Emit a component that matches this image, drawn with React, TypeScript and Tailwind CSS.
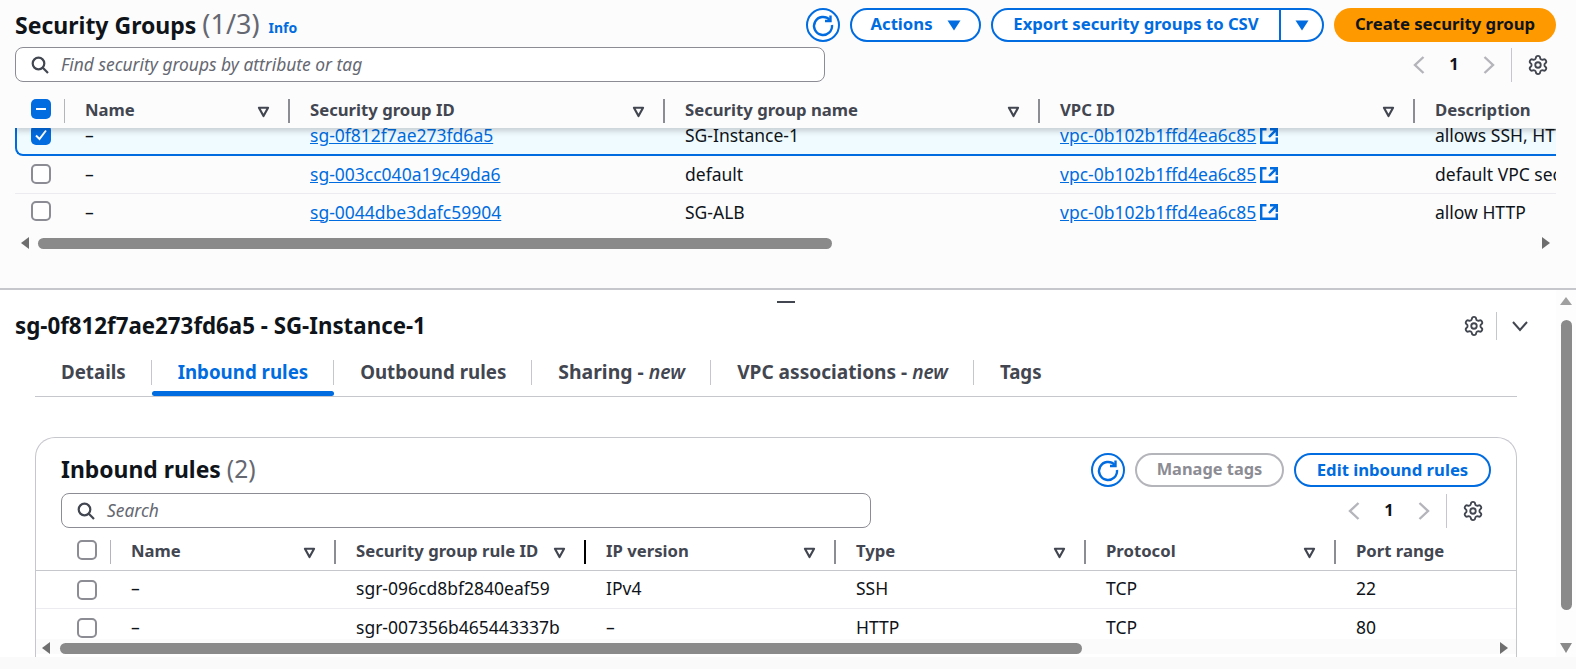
import React from "react";
import { Settings } from "lucide-react";

const F = "[font-family:'Noto_Sans',sans-serif]";

function Refresh() {
  return (
    <button className="w-[34px] h-[34px] rounded-full border-2 border-[#006ce0] bg-white flex items-center justify-center shrink-0">
      <svg width="24" height="24" viewBox="0 0 24 24" fill="none" stroke="#006ce0" strokeWidth="2.400">
        <path d="M18.600 6.800A9 9 0 1 0 21 12" />
        <path d="M19.500 2.500v5.500H14" />
      </svg>
    </button>
  );
}
function Gear() {
  return <Settings size={22} color="#424650" strokeWidth={2} className="shrink-0" />;
}
function Caret() {
  return (
    <svg width="13" height="13" viewBox="0 0 12 12" className="shrink-0">
      <path d="M1.800 2.500h8.400L6 10.200z" fill="none" stroke="#424650" strokeWidth="2" strokeLinejoin="round" />
    </svg>
  );
}
function SolidCaret() {
  return (
    <svg width="14" height="11" viewBox="0 0 14 11" className="shrink-0">
      <path d="M0.500 0.500h13L7 10.500z" fill="#006ce0" />
    </svg>
  );
}
function Ext() {
  return (
    <svg width="20" height="18" viewBox="0 0 20 18" fill="none" stroke="#006ce0" strokeWidth="2.400" className="shrink-0">
      <path d="M7.500 2.200H2.200v13.600h15.600V10.500" />
      <path d="M11 2.200h6.800V9M17.800 2.200L10 10" />
    </svg>
  );
}
function Search() {
  return (
    <svg width="18" height="18" viewBox="0 0 18 18" fill="none" stroke="#424650" strokeWidth="2.200" className="shrink-0">
      <circle cx="7.500" cy="7.500" r="5.800" />
      <path d="M11.800 11.800L17 17" />
    </svg>
  );
}
function Box() {
  return <span className="w-[20px] h-[20px] rounded-[5px] border-2 border-[#8c8c94] bg-white block shrink-0" />;
}
function Pager() {
  return (
    <div className="flex items-center text-[#0f141a]">
      <svg width="14" height="20" viewBox="0 0 14 20" fill="none" stroke="#b4b4bb" strokeWidth="2.400"><path d="M11.500 2L3 10l8.500 8" /></svg>
      <span className="w-[56px] text-center font-bold text-[16.500px]">1</span>
      <svg width="14" height="20" viewBox="0 0 14 20" fill="none" stroke="#b4b4bb" strokeWidth="2.400"><path d="M2.500 2l8.500 8-8.500 8" /></svg>
      <span className="w-px h-[34px] bg-[#c6c6cd] ml-[15px] mr-[15px]" />
      <Gear />
    </div>
  );
}
function Th({ w, label, sep = "bg-[#8c8c94]", filter = true }: { w: string; label: string; sep?: string; filter?: boolean }) {
  return (
    <div className={`${w} shrink-0 h-[24px] flex items-center justify-between pl-[20px] pr-[20px] relative`}>
      <span className="font-bold text-[#424650] text-[16.700px] whitespace-nowrap pb-[2px]">{label}</span>
      {filter && <Caret />}
      {filter && <span className={`absolute right-0 top-0 h-[24px] w-[2px] ${sep}`} />}
    </div>
  );
}
function LeftArrow() {
  return <svg width="10" height="12" viewBox="0 0 10 12" className="shrink-0"><path d="M9 0v12L1 6z" fill="#6e6e6e" /></svg>;
}
function RightArrow() {
  return <svg width="10" height="12" viewBox="0 0 10 12" className="shrink-0"><path d="M1 0v12l8-6z" fill="#6e6e6e" /></svg>;
}

const rows = [
  { id: "sg-003cc040a19c49da6", name: "default", desc: "default VPC security group" },
  { id: "sg-0044dbe3dafc59904", name: "SG-ALB", desc: "allow HTTP" },
];
const VPC = "vpc-0b102b1ffd4ea6c85";

function Cell({ w, children }: { w: string; children: React.ReactNode }) {
  return <div className={`${w} shrink-0 pl-[20px] flex items-center gap-[3px] whitespace-nowrap text-[17.500px]`}>{children}</div>;
}
function Link({ t }: { t: string }) {
  return <a className="text-[#006ce0] underline">{t}</a>;
}

const tabs = ["Details", "Inbound rules", "Outbound rules"];

export default function App() {
  return (
    <div className={`w-[1576px] h-[669px] overflow-hidden bg-[#fcfcfc] text-[#0f141a] flex flex-col ${F}`}>
      {/* top */}
      <section className="h-[288px] shrink-0 pl-[15px] pr-[20px] pt-[8px] flex flex-col">
        <div className="flex items-center h-[34px]">
          <h1 className="font-bold text-[23px] whitespace-nowrap">Security Groups <span className="font-normal text-[27px] leading-[30px] text-[#656871]">(1/3)</span></h1>
          <a className="ml-[9px] mt-[5px] font-bold text-[14px] text-[#006ce0]">Info</a>
          <div className="ml-auto flex items-center gap-[10px]">
            <Refresh />
            <button className="h-[34px] w-[131px] rounded-full border-2 border-[#006ce0] bg-white text-[#006ce0] font-bold text-[16.700px] flex items-center justify-center gap-[14px]"><span className="pb-[2px]">Actions</span> <SolidCaret /></button>
            <div className="h-[34px] w-[333px] rounded-full border-2 border-[#006ce0] bg-white text-[#006ce0] font-bold text-[16.700px] flex items-center">
              <span className="w-[288px] text-center border-r-2 border-[#006ce0] h-[30px] leading-[28px] whitespace-nowrap">Export security groups to CSV</span>
              <span className="flex-1 flex justify-center"><SolidCaret /></span>
            </div>
            <button className="h-[34px] w-[222px] rounded-full bg-[#ff9900] text-[#0f141a] font-bold text-[16.700px] whitespace-nowrap pb-[2px]">Create security group</button>
          </div>
        </div>
        <div className="flex items-center h-[35px] mt-[5px]">
          <div className="w-[810px] h-[35px] rounded-[8px] border border-[#8c8c94] bg-white flex items-center pl-[15px] gap-[12px]">
            <Search />
            <span className="italic text-[#656871] text-[17.400px]">Find security groups by attribute or tag</span>
          </div>
          <div className="ml-auto mr-[7px]"><Pager /></div>
        </div>
        <div className="mt-[17px] overflow-hidden flex flex-col">
          <div className="h-[29px] flex items-start shadow-[0_3px_6px_rgba(0,0,0,0.18)] relative z-10 bg-[#fcfcfc]">
            <div className="w-[50px] shrink-0 pl-[16px] relative h-[24px]">
              <span className="w-[20px] h-[20px] rounded-[5px] bg-[#006ce0] flex items-center justify-center"><span className="w-[10px] h-[2px] bg-white block" /></span>
              <span className="absolute right-0 top-0 h-[24px] w-px bg-[#b4b4bb]" />
            </div>
            <Th w="w-[225px]" label="Name" />
            <Th w="w-[375px]" label="Security group ID" />
            <Th w="w-[375px]" label="Security group name" />
            <Th w="w-[375px]" label="VPC ID" />
            <Th w="w-[200px]" label="Description" filter={false} />
          </div>
          <div className="h-[40px] -mt-[12px] w-[1600px] shrink-0 flex items-center border-b-2 border-l-2 border-[#006ce0] rounded-bl-[8px] bg-[#f0fbff]">
            <div className="w-[48px] shrink-0 pl-[14px]">
              <span className="w-[20px] h-[20px] rounded-[5px] bg-[#006ce0] flex items-center justify-center">
                <svg width="14" height="14" viewBox="0 0 14 14" fill="none" stroke="#fff" strokeWidth="2"><path d="M2 7.500L5.500 11 12 2.500" /></svg>
              </span>
            </div>
            <div className="flex items-center mt-[1px]">
              <Cell w="w-[225px]">–</Cell>
              <Cell w="w-[375px]"><Link t="sg-0f812f7ae273fd6a5" /></Cell>
              <Cell w="w-[375px]">SG-Instance-1</Cell>
              <Cell w="w-[375px]"><Link t={VPC} /><Ext /></Cell>
              <Cell w="w-[200px]">allows SSH, HTTP</Cell>
            </div>
          </div>
          {rows.map((r, i) => (
            <div key={r.id} className={`h-[38px] w-[1600px] shrink-0 flex items-center ${i === 0 ? "border-b border-[#ebebf0]" : "pb-[2px]"}`}>
              <div className="w-[50px] shrink-0 pl-[16px] mb-[2px]"><Box /></div>
              <Cell w="w-[225px]">–</Cell>
              <Cell w="w-[375px]"><Link t={r.id} /></Cell>
              <Cell w="w-[375px]">{r.name}</Cell>
              <Cell w="w-[375px]"><Link t={VPC} /><Ext /></Cell>
              <Cell w="w-[200px]">{r.desc}</Cell>
            </div>
          ))}
        </div>
        <div className="flex items-center mt-[5px] h-[12px] pl-[5px] pr-[5px]">
          <LeftArrow />
          <div className="h-[11px] w-[794px] rounded-full bg-[#8a8a8a] ml-[8px]" />
          <div className="flex-1" />
          <RightArrow />
        </div>
      </section>

      {/* bottom */}
      <section className="h-[381px] shrink-0 border-t-2 border-[#c6c6cd] bg-white relative flex flex-col">
        <span className="absolute left-[777px] top-[11px] w-[18px] h-[2px] bg-[#424650]" />
        <div className="h-[367px] flex">
          <div className="flex-1 min-w-0 flex flex-col">
            <div className="h-[40px] mt-[16px] pl-[15px] pr-[27px] flex items-center">
              <h2 className="font-bold text-[22.300px]">sg-0f812f7ae273fd6a5 - SG-Instance-1</h2>
              <div className="ml-auto flex items-center">
                <Gear />
                <span className="w-px h-[28px] bg-[#c6c6cd] ml-[11px] mr-[14px]" />
                <svg width="18" height="18" viewBox="0 0 18 18" fill="none" stroke="#424650" strokeWidth="2"><path d="M2 5l7 8 7-8" /></svg>
              </div>
            </div>
            <div className="ml-[35px] mr-[39px] mt-[11px] h-[40px] shrink-0 border-b border-[#c6c6cd] flex items-start font-bold text-[#424650] text-[18.700px]">
              {tabs.map((t, i) => (
                <div key={t} className="relative h-[39px] flex items-start px-[26px]">
                  <span className={`whitespace-nowrap leading-[30px] ${i === 1 ? "text-[#006ce0]" : ""}`}>{t}</span>
                  {i === 1 && <span className="absolute left-0 right-0 bottom-0 h-[5px] rounded-[3px] bg-[#006ce0]" />}
                  <span className="absolute right-0 top-[3px] h-[25px] w-px bg-[#c6c6cd]" />
                </div>
              ))}
              <div className="relative h-[39px] px-[26px] text-[19.400px]">
                <span className="whitespace-nowrap leading-[30px]">Sharing - <em className="font-semibold">new</em></span>
                <span className="absolute right-0 top-[3px] h-[25px] w-px bg-[#c6c6cd]" />
              </div>
              <div className="relative h-[39px] px-[26px] text-[19.100px]">
                <span className="whitespace-nowrap leading-[30px]">VPC associations - <em className="font-semibold">new</em></span>
                <span className="absolute right-0 top-[3px] h-[25px] w-px bg-[#c6c6cd]" />
              </div>
              <div className="h-[39px] px-[26px]"><span className="leading-[30px]">Tags</span></div>
            </div>
            <div className="ml-[35px] mr-[39px] mt-[40px] flex-1 min-h-0 rounded-t-[20px] border-x border-t border-[#c6c6cd] overflow-hidden pt-[15px] flex flex-col">
              <div className="px-[25px] flex items-center h-[34px] shrink-0">
                <h3 className="font-bold text-[22.900px] pb-[2px]">Inbound rules <span className="font-normal text-[24.500px] text-[#656871]">(2)</span></h3>
                <div className="ml-auto flex items-center gap-[10px]">
                  <Refresh />
                  <button className="h-[34px] w-[149px] rounded-full border-2 border-[#b4b4bb] text-[#8c8c94] font-bold text-[16.400px] whitespace-nowrap pb-[1px]">Manage tags</button>
                  <button className="h-[34px] w-[197px] rounded-full border-2 border-[#006ce0] text-[#006ce0] font-bold text-[16.700px] whitespace-nowrap pb-[1px]">Edit inbound rules</button>
                </div>
              </div>
              <div className="px-[25px] flex items-center mt-[6px] h-[35px] shrink-0">
                <div className="w-[810px] h-[35px] rounded-[8px] border border-[#8c8c94] flex items-center pl-[15px] gap-[12px]">
                  <Search />
                  <span className="italic text-[#656871] text-[17.400px] pb-[1px]">Search</span>
                </div>
                <div className="ml-auto mr-[7px]"><Pager /></div>
              </div>
              <div className="pl-[25px] mt-[12px] h-[31px] shrink-0 flex items-start border-b border-[#c6c6cd]">
                <div className="w-[50px] shrink-0 pl-[16px] relative h-[24px]">
                  <Box />
                  <span className="absolute right-0 top-0 h-[24px] w-px bg-[#b4b4bb]" />
                </div>
                <Th w="w-[225px]" label="Name" />
                <Th w="w-[250px]" label="Security group rule ID" sep="bg-black" />
                <Th w="w-[250px]" label="IP version" />
                <Th w="w-[250px]" label="Type" />
                <Th w="w-[250px]" label="Protocol" />
                <Th w="w-[150px]" label="Port range" filter={false} />
              </div>
              <div className="h-[68px] shrink-0 overflow-hidden">
                {[
                  ["sgr-096cd8bf2840eaf59", "IPv4", "SSH", "22"],
                  ["sgr-007356b465443337b", "–", "HTTP", "80"],
                ].map((r, i) => (
                  <div key={r[0]} className={`pl-[25px] h-[38px] flex items-center ${i === 0 ? "border-b border-[#ebebf0]" : ""}`}>
                    <div className="w-[50px] shrink-0 pl-[16px]"><Box /></div>
                    <div className="flex items-center pb-[2px]">
                      <Cell w="w-[225px]">–</Cell>
                      <Cell w="w-[250px]">{r[0]}</Cell>
                      <Cell w="w-[250px]">{r[1]}</Cell>
                      <Cell w="w-[250px]">{r[2]}</Cell>
                      <Cell w="w-[250px]">TCP</Cell>
                      <Cell w="w-[150px]">{r[3]}</Cell>
                    </div>
                  </div>
                ))}
              </div>
              <div className="h-[15px] shrink-0 bg-[#fbfbfb] flex items-center pl-[5px] pr-[7px] pt-[3px]">
                <LeftArrow />
                <div className="h-[11px] w-[1022px] rounded-full bg-[#8a8a8a] ml-[9px]" />
                <div className="flex-1" />
                <RightArrow />
              </div>
            </div>
          </div>
          <div className="w-[20px] shrink-0 flex flex-col items-center bg-[#fdfdfd] pt-[7px]">
            <svg width="12" height="8" viewBox="0 0 12 8" className="shrink-0"><path d="M0 8h12L6 0z" fill="#a0a0a0" /></svg>
            <div className="w-[11px] h-[290px] rounded-full bg-[#8a8a8a] mt-[15px] shrink-0" />
            <svg width="12" height="10" viewBox="0 0 12 10" className="shrink-0 mt-[33px]"><path d="M0 0h12L6 10z" fill="#8a8a8a" /></svg>
          </div>
        </div>
        <div className="flex-1 bg-[#fafafa]" />
      </section>
    </div>
  );
}
